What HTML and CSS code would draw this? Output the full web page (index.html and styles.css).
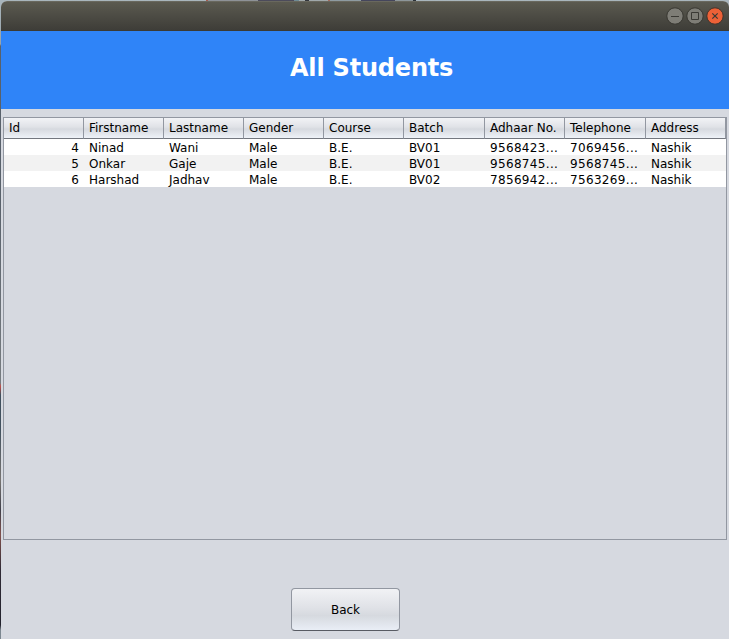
FILE: index.html
```
<!DOCTYPE html>
<html lang="en">
<head>
<meta charset="utf-8">
<title>All Students</title>
<link rel="stylesheet" href="styles.css">
</head>
<body>
<div class="desktop">
  <main class="window">
    <header class="titlebar">
      <svg class="control" viewBox="0 0 18 18"><circle class="disc" cx="9" cy="9" r="8.2"/><path d="M5 9.5h8"/></svg>
      <svg class="control" viewBox="0 0 18 18"><circle class="disc" cx="9" cy="9" r="8.2"/><path d="M5.5 5.5h7v7h-7z"/></svg>
      <svg class="control close" viewBox="0 0 18 18"><circle class="disc" cx="9" cy="9" r="8.2"/><path d="M6.3 6.3l5.4 5.4M11.7 6.3l-5.4 5.4"/></svg>
    </header>
    <div class="banner"><h1>All Students</h1></div>
    <div class="scrollpane">
      <table>
        <colgroup><col><col><col><col><col><col class="wide"><col><col class="wide"><col></colgroup>
        <thead>
          <tr><th>Id</th><th>Firstname</th><th>Lastname</th><th>Gender</th><th>Course</th><th>Batch</th><th>Adhaar No.</th><th>Telephone</th><th>Address</th></tr>
        </thead>
        <tbody>
          <tr><td>4</td><td>Ninad</td><td>Wani</td><td>Male</td><td>B.E.</td><td>BV01</td><td class="number">9568423...</td><td class="number">7069456...</td><td>Nashik</td></tr>
          <tr><td>5</td><td>Onkar</td><td>Gaje</td><td>Male</td><td>B.E.</td><td>BV01</td><td class="number">9568745...</td><td class="number">9568745...</td><td>Nashik</td></tr>
          <tr><td>6</td><td>Harshad</td><td>Jadhav</td><td>Male</td><td>B.E.</td><td>BV02</td><td class="number">7856942...</td><td class="number">7563269...</td><td>Nashik</td></tr>
        </tbody>
      </table>
    </div>
    <footer><button type="button">Back</button></footer>
  </main>
</div>
</body>
</html>
```
FILE: styles.css
```
* { box-sizing: border-box; }
body {
  margin: 0;
  font: 12px/16px "DejaVu Sans", sans-serif;
  color: #000;
}
.desktop {
  height: 639px;
  padding: 1px 0 0 1px;
  overflow: hidden;
  background:
    linear-gradient(90deg, transparent 206px, #a35c50 206px 208px, #8e9297 208px 258px, #4c4b5b 258px 294px, #6e8b94 294px 299px, #a0a8aa 299px 305px, #33363c 305px 309px, #a0a8aa 309px 328px, #a36c60 328px 330px, #8e9ba1 330px 361px, #45465c 361px 395px, #8d969a 395px 413px, #2c3238 413px 416px, transparent 416px) 0 0 / 729px 1px no-repeat,
    linear-gradient(#a9b6bd 0, #98a4ab 44px, #59616b 46px, #59616b 200px, #777c80 383px, #c0504a 386px, #3f4f5d 395px, #43525f 430px, #777472 480px, #40404a 510px, #80504c 535px, #302b36 570px, #22222c 625px, #7c8790 630px);
  background-color: #a2afb5;
}
.window {
  height: 638px;
  background: #d6d9e0;
  border-radius: 6px 6px 0 0;
  overflow: hidden;
  display: flex;
  flex-direction: column;
}
.titlebar {
  height: 30px;
  flex: none;
  display: flex;
  justify-content: flex-end;
  align-items: center;
  gap: 2px;
  padding-right: 5px;
  background: linear-gradient(#5b5a50, #3e3d38);
  border-top: 1px solid #69685e;
  border-bottom: 1px solid #3b3a34;
}
.control { width: 18px; height: 18px; }
.control .disc { fill: #7e7d76; stroke: #383731; }
.control path { fill: none; stroke: #3a3934; stroke-width: 1; }
.close .disc { fill: #ed6137; stroke: #41332b; }
.close path { stroke-width: 1.2; }
.banner {
  height: 78px;
  flex: none;
  background: #2f84f8;
  color: #fff;
  padding: 23px 0 0 289px;
}
h1 {
  margin: 0;
  font-size: 24px;
  line-height: 28px;
  letter-spacing: -0.2px;
  white-space: nowrap;
}
.scrollpane {
  width: 724px;
  height: 423px;
  flex: none;
  margin: 8px 0 0 2px;
  border: 1px solid #9297a1;
}
table {
  width: 722px;
  table-layout: fixed;
  border-collapse: separate;
  border-spacing: 0;
}
col { width: 80px; }
col.wide { width: 81px; }
th {
  height: 21px;
  padding: 1px 0 0 5px;
  text-align: left;
  font-weight: normal;
  line-height: 19px;
  border-right: 1px solid #9297a1;
  border-bottom: 1px solid #73777f;
  background: linear-gradient(#f2f3f6 0, #e0e2e7 45%, #d6d9df 55%, #eef2f8 100%);
}
td {
  height: 16px;
  padding: 1px 0 0 5px;
  line-height: 15px;
  white-space: nowrap;
  background: #fff;
}
tbody td { padding-top: 2px; line-height: 14px; }
td:first-child { text-align: right; padding-right: 5px; }
.number { letter-spacing: 0.33px; }
tr:nth-child(even) td { background: #f2f2f2; }
footer { padding: 48px 0 0 290px; }
button {
  display: block;
  width: 109px;
  height: 43px;
  padding: 0;
  font: inherit;
  color: #000;
  border: 1px solid #9297a1;
  border-bottom-color: #585b63;
  border-radius: 4px;
  background: linear-gradient(#f1f2f5 0, #e0e2e7 45%, #d6d9df 65%, #e9eef6 100%);
}
```
